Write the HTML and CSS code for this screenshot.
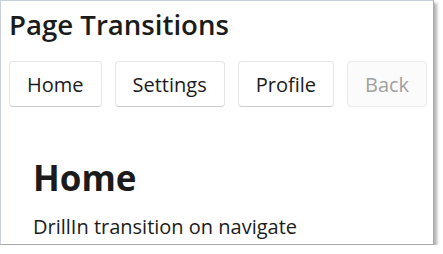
FILE: index.html
```html
<!DOCTYPE html>
<html lang="en">
<head>
    <meta charset="UTF-8">
    <title>Page Transitions</title>
    <link rel="stylesheet" href="styles.css">
</head>
<body>
<div class="window">
    <h1 class="title">Page Transitions</h1>
    <div class="navbar">
        <button class="navbtn">Home</button>
        <button class="navbtn">Settings</button>
        <button class="navbtn">Profile</button>
        <button class="navbtn" disabled>Back</button>
    </div>
    <div class="page">
        <h2 class="page-title">Home</h2>
        <p class="page-text">DrillIn transition on navigate</p>
    </div>
</div>
</body>
</html>
```

FILE: styles.css
```css
* {
    margin: 0;
    padding: 0;
    box-sizing: border-box;
}
body {
    background: #fff;
    font-family: "Open Sans", "Noto Sans", sans-serif;
    color: #1b1b1b;
}
.window {
    width: 434px;
    height: 245px;
    border: 1px solid #c9d0dc;
    border-right-color: #a9a9a9;
    border-bottom-color: #a9a9a9;
    box-shadow: 3px 3px 3px rgba(0, 0, 0, .3);
    background: #fff;
    padding: 0 8px;
    overflow: hidden;
}
.title {
    font-size: 27.6px;
    font-weight: 600;
    line-height: 36px;
    margin-top: 5px;
}
.navbar {
    display: flex;
    gap: 13px;
    margin-top: 19px;
}
.navbtn {
    height: 46px;
    padding: 0 17px;
    font-family: inherit;
    font-size: 20px;
    color: #1b1b1b;
    background: #fff;
    border: 1px solid #e5e5e5;
    border-bottom-color: #cccccc;
    border-radius: 4px;
}
.navbtn:disabled {
    color: #a0a0a0;
    background: #fbfbfb;
    border-color: #ebebeb;
}
.page {
    padding: 0 24px;
    margin-top: 51px;
}
.page-title {
    font-size: 35px;
    font-weight: 700;
    line-height: 40px;
}
.page-text {
    font-size: 20px;
    line-height: 28px;
    margin-top: 15px;
}
```
